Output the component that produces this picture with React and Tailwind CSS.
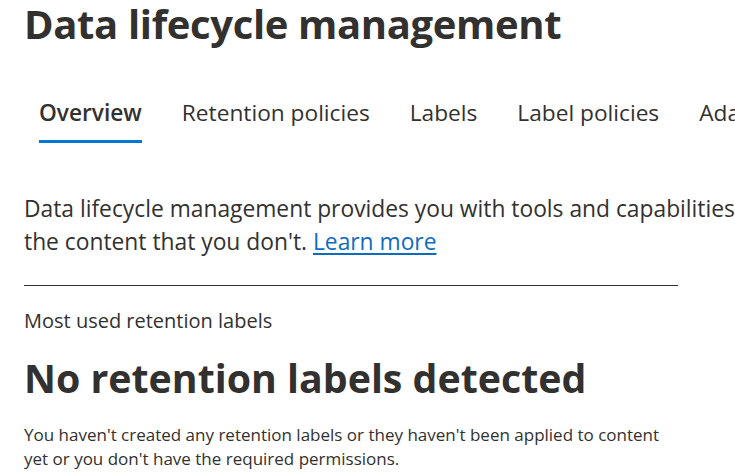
export default function App() {
  return (
    <div className="w-[735px] h-[475px] overflow-hidden bg-white text-[#323130] font-['Open_Sans',sans-serif]">
      <div className="w-[1400px] pl-[24px]">
        <h1 className="text-[40px] leading-[47px] font-bold tracking-[-0.35px]">Data lifecycle management</h1>
        <nav className="mt-[52px] flex gap-[40px] pl-[15px] text-[22.7px] leading-[28px]">
          <div className="flex flex-col">
            <span className="font-semibold">Overview</span>
            <span className="mt-[13px] h-[3px] bg-[#0078d4]" />
          </div>
          <span>Retention policies</span>
          <span>Labels</span>
          <span>Label policies</span>
          <span>Adaptive scopes</span>
          <span>Policy lookup</span>
        </nav>
        <p className="mt-[49px] text-[22.8px] leading-[33px] whitespace-nowrap">
          Data lifecycle management provides you with tools and capabilities to retain the content that you need and delete
          <br />
          the content that you don't.{' '}
          <a href="#" className="text-[#0f6cbd] underline underline-offset-[3px]">Learn more</a>
        </p>
        <div className="mt-[27px] w-[654px] h-px bg-[#323130]" />
        <h3 className="mt-[22px] text-[20px] leading-[26px] font-normal">Most used retention labels</h3>
        <h2 className="mt-[20px] text-[39.3px] leading-[48px] font-bold">No retention labels detected</h2>
        <p className="mt-[21px] w-[654px] text-[17px] leading-[24px]">
          You haven't created any retention labels or they haven't been applied to content yet or you don't have the required permissions.
        </p>
      </div>
    </div>
  );
}
